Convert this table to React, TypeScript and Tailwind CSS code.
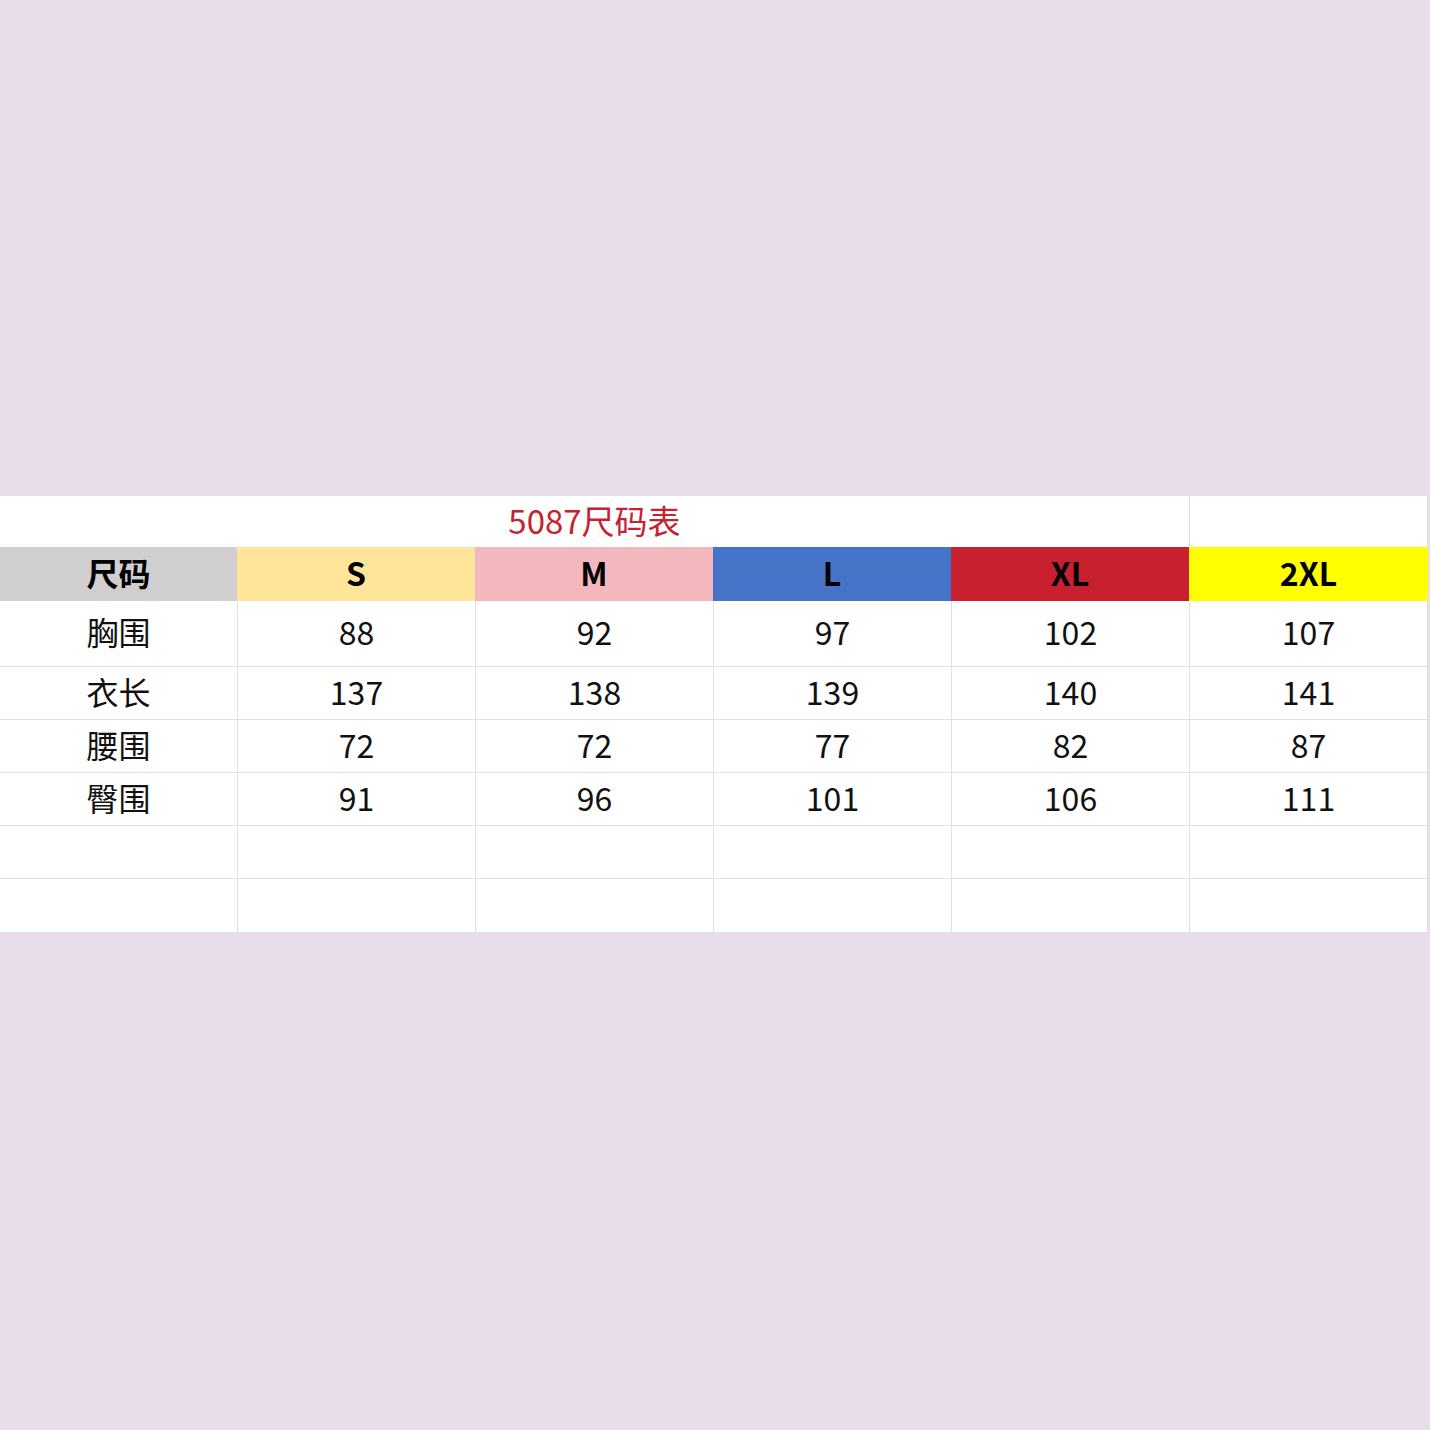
import React from "react";

const font = { fontFamily: '"Noto Sans CJK SC", "Noto Sans", sans-serif' };

const headers = [
  { t: "尺码", bg: "bg-[#d0cece]" },
  { t: "S", bg: "bg-[#fee599]" },
  { t: "M", bg: "bg-[#f4b7be]" },
  { t: "L", bg: "bg-[#4674c8]" },
  { t: "XL", bg: "bg-[#c8202f]" },
  { t: "2XL", bg: "bg-[#ffff00]" },
];

const rows: { h: string; cells: string[] }[] = [
  { h: "h-[66px]", cells: ["胸围", "88", "92", "97", "102", "107"] },
  { h: "h-[53px]", cells: ["衣长", "137", "138", "139", "140", "141"] },
  { h: "h-[53px]", cells: ["腰围", "72", "72", "77", "82", "87"] },
  { h: "h-[53px]", cells: ["臀围", "91", "96", "101", "106", "111"] },
  { h: "h-[53px]", cells: ["", "", "", "", "", ""] },
  { h: "h-[54px]", cells: ["", "", "", "", "", ""] },
];

const cols = "grid grid-cols-[237px_238px_238px_238px_238px_239px_2px]";

export default function App() {
  return (
    <div className="w-[1430px] h-[1430px] bg-[#e8deeb] pt-[496px]" style={font}>
      <div className="bg-white">
        {/* title row */}
        <div className={`${cols} h-[51px]`}>
          <div className="col-span-5 flex items-center justify-center text-[33px] text-[#c4232f] leading-none pb-[3px]">
            5087尺码表
          </div>
          <div className="border-l border-[#dcdcdc] border-r"></div>
          <div className="bg-[#e8deeb]"></div>
        </div>
        {/* header row */}
        <div className={`${cols} h-[54px]`}>
          {headers.map((c, i) => (
            <div
              key={i}
              className={`${c.bg} flex items-center justify-center text-[32px] font-bold text-black leading-none pb-[5px]`}
            >
              {c.t}
            </div>
          ))}
          <div className="bg-[#e8deeb]"></div>
        </div>
        {/* data rows */}
        {rows.map((r, ri) => (
          <div key={ri} className={`${cols} ${r.h}`}>
            {r.cells.map((c, ci) => (
              <div
                key={ci}
                className={`flex items-center justify-center text-[32px] text-[#111] leading-none pb-[5px] border-b border-[#e0e0e0] ${
                  ci > 0 ? "border-l" : ""
                } ${ci === 5 ? "border-r" : ""}`}
              >
                {c}
              </div>
            ))}
            <div className="bg-[#e8deeb]"></div>
          </div>
        ))}
      </div>
    </div>
  );
}
